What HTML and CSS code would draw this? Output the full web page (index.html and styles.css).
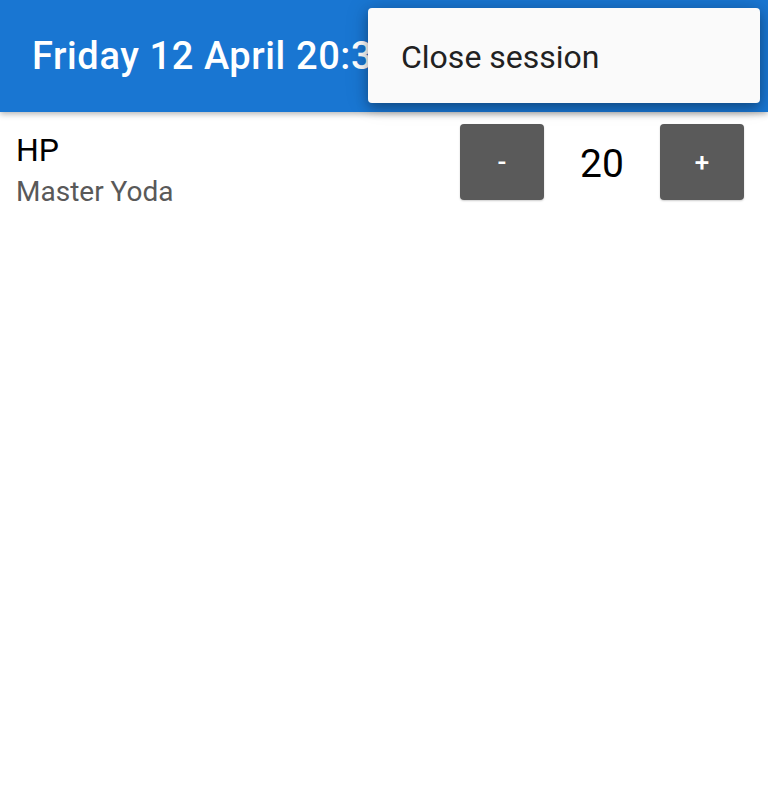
FILE: index.html
```html
<!DOCTYPE html>
<html>
<head>
<meta charset="utf-8">
<link rel="stylesheet" href="styles.css">
</head>
<body>
<header class="appbar">
  <h1 class="title">Friday 12 April 20:30</h1>
</header>
<main class="content">
  <div class="row">
    <div class="labels">
      <div class="name">HP</div>
      <div class="sub">Master Yoda</div>
    </div>
    <div class="counter">
      <button class="btn">-</button>
      <span class="value">20</span>
      <button class="btn">+</button>
    </div>
  </div>
</main>
<div class="menu">
  <div class="menu-item">Close session</div>
</div>
</body>
</html>
```
FILE: styles.css
```css
html, body {
  margin: 0;
  padding: 0;
  background: #ffffff;
  font-family: Roboto, "Noto Sans", sans-serif;
}
.appbar {
  position: relative;
  z-index: 1;
  height: 112px;
  background: #1976d2;
  box-shadow: 0 2px 6px rgba(0,0,0,0.3);
  display: flex;
  align-items: center;
  padding: 0 32px;
  overflow: hidden;
}
.title {
  margin: 0;
  color: #ffffff;
  font-size: 38px;
  letter-spacing: 0.6px;
  font-weight: 500;
  white-space: nowrap;
}
.content {
  padding: 12px 24px 0 16px;
}
.row {
  display: flex;
  justify-content: space-between;
  align-items: flex-start;
}
.labels {
  padding-top: 8px;
}
.name {
  font-size: 32px;
  color: #000;
  line-height: 36px;
  margin-bottom: 7px;
}
.sub {
  font-size: 28px;
  color: #595959;
  line-height: 34px;
}
.counter {
  display: flex;
  align-items: center;
}
.btn {
  width: 84px;
  height: 76px;
  border: none;
  border-radius: 4px;
  background: #5a5a5a;
  color: #ffffff;
  font-family: Roboto, sans-serif;
  font-size: 26px;
  font-weight: 500;
  box-shadow: 0 1px 2px rgba(0,0,0,0.2);
  padding: 0;
}
.value {
  width: 116px;
  text-align: center;
  font-size: 39px;
  color: #000;
  padding-top: 3px;
}
.menu {
  position: absolute;
  z-index: 5;
  top: 8px;
  left: 368px;
  width: 392px;
  height: 95px;
  background: #fafafa;
  border-radius: 4px;
  box-shadow: 0 5px 12px rgba(0,0,0,0.3), 0 0 24px rgba(0,0,0,0.15);
  display: flex;
  align-items: center;
}
.menu-item {
  padding-left: 33px;
  font-size: 32px;
  color: #212121;
  padding-top: 2px;
}
```
